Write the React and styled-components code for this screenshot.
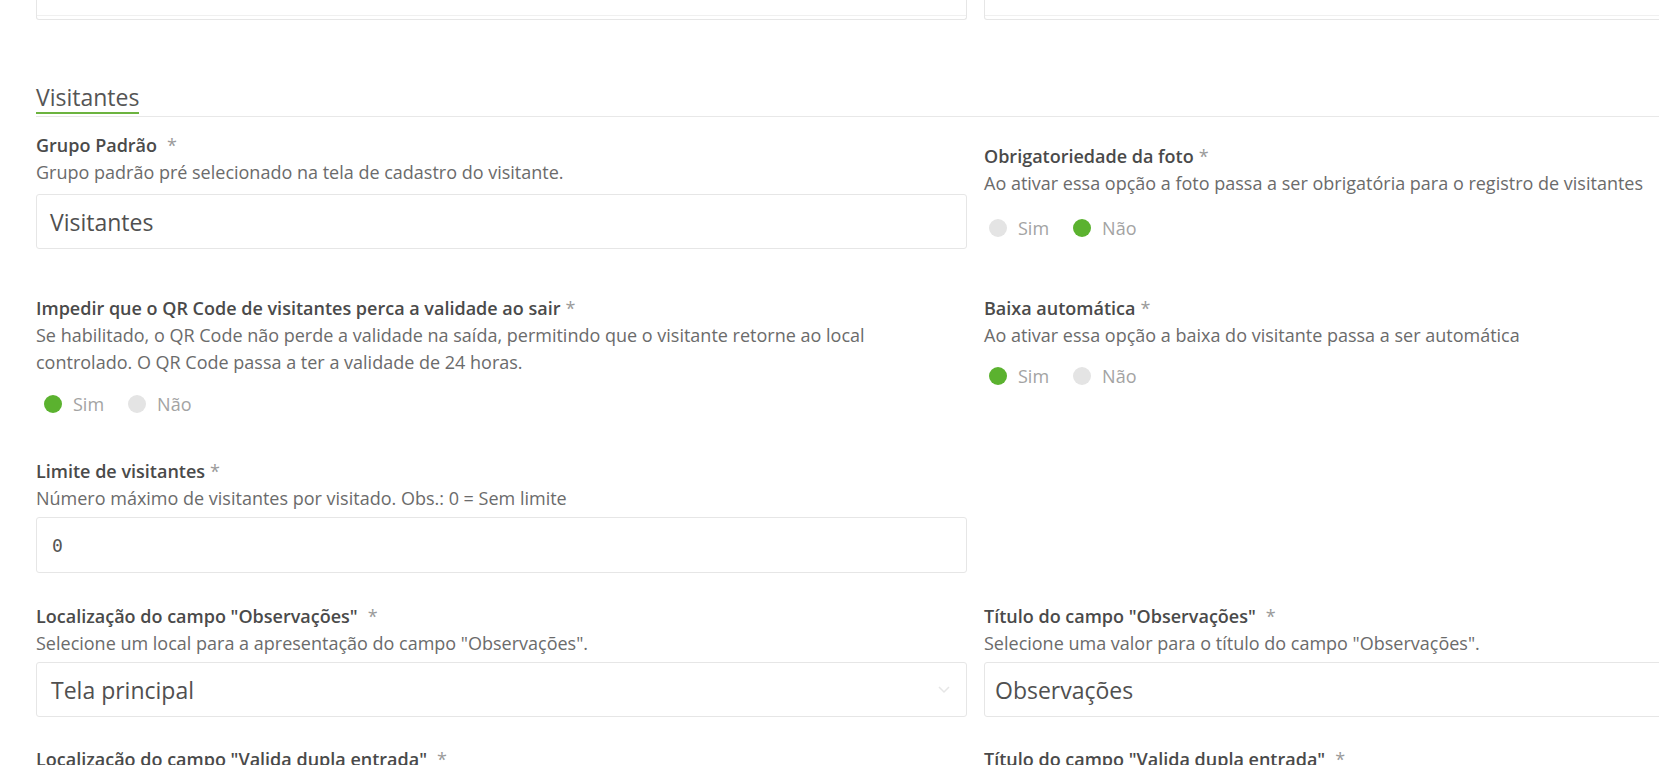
import styled, { createGlobalStyle } from 'styled-components';

const colors = {
  green: '#5bb22f',
  off: '#e4e4e4',
  border: '#e6e6e6',
  label: '#4a4a4a',
  text: '#6b6b6b',
  muted: '#a3a3a3',
};

const GlobalStyle = createGlobalStyle`
  html, body {
    margin: 0;
    padding: 0;
    background: #fff;
    overflow: hidden;
  }
  body {
    font-family: "Open Sans", "Noto Sans", sans-serif;
    -webkit-font-smoothing: antialiased;
  }
`;

const Page = styled.div`
  width: 1915px;
  padding-left: 36px;
  box-sizing: border-box;
`;

const Row = styled.div`
  display: grid;
  grid-template-columns: 931px 931px;
  column-gap: 17px;
  align-items: start;
  margin-top: ${({ $top }) => $top || 0}px;
`;

const TopBox = styled.div`
  height: 20px;
  box-sizing: border-box;
  border: 1px solid ${colors.border};
  border-top: none;
  border-radius: 0 0 3px 3px;
`;

const TopInner = styled.div`
  height: 15px;
  border-bottom: 1px solid #f0f0f0;
`;

const SectionHeader = styled.div`
  margin-top: 63px;
  border-bottom: 1px solid #e8e8e8;
`;

const SectionTitle = styled.h2`
  display: inline-block;
  margin: 0 0 2px;
  font-size: 23px;
  line-height: 29px;
  font-weight: 400;
  color: #555;
  border-bottom: 2px solid #6cb33f;
`;

const Field = styled.div`
  padding-top: ${({ $pad }) => $pad || 0}px;
`;

const Label = styled.div`
  font-size: 18px;
  font-weight: 600;
  line-height: 27px;
  color: ${colors.label};
  white-space: nowrap;
`;

const Star = styled.span`
  color: #9a9a9a;
  font-weight: 400;
  margin-left: ${({ $gap }) => $gap || 5}px;
`;

const Desc = styled.div`
  font-size: 18px;
  line-height: 27px;
  color: ${colors.text};
  white-space: nowrap;
`;

const Input = styled.div`
  position: relative;
  margin-top: ${({ $top }) => $top || 8}px;
  height: ${({ $h }) => $h || 55}px;
  box-sizing: border-box;
  border: 1px solid ${colors.border};
  border-radius: 3px;
  display: flex;
  align-items: center;
  padding-left: ${({ $pad }) => $pad || 13}px;
  font-size: 23px;
  color: #505050;
`;

const Chevron = styled.svg`
  position: absolute;
  right: 16px;
  top: 50%;
  margin-top: -4px;
`;

const Mono = styled.span`
  font-family: "DejaVu Sans Mono", monospace;
  font-size: 18px;
  color: #555;
`;

const RadioGroup = styled.div`
  display: flex;
  align-items: center;
  gap: 24px;
  margin-top: ${({ $top }) => $top || 20}px;
  padding-left: ${({ $indent }) => $indent || 7}px;
  height: 18px;
`;

const RadioOption = styled.div`
  display: flex;
  align-items: center;
  gap: 11px;
  font-size: 18px;
  line-height: 18px;
  color: ${colors.muted};
`;

const Dot = styled.span`
  width: 18px;
  height: 18px;
  border-radius: 50%;
  background: ${({ $on }) => ($on ? colors.green : colors.off)};
`;

const Radios = ({ value, top, indent }) => (
  <RadioGroup $top={top} $indent={indent}>
    <RadioOption>
      <Dot $on={value === 'sim'} />
      Sim
    </RadioOption>
    <RadioOption>
      <Dot $on={value === 'nao'} />
      Não
    </RadioOption>
  </RadioGroup>
);

const App = () => (
  <Page>
    <GlobalStyle />
    <Row>
      <TopBox><TopInner /></TopBox>
      <TopBox><TopInner /></TopBox>
    </Row>

    <SectionHeader>
      <SectionTitle>Visitantes</SectionTitle>
    </SectionHeader>

    <Row $top={15}>
      <Field>
        <Label>Grupo Padrão<Star $gap={10}>*</Star></Label>
        <Desc>Grupo padrão pré selecionado na tela de cadastro do visitante.</Desc>
        <Input>Visitantes</Input>
      </Field>
      <Field $pad={11}>
        <Label>Obrigatoriedade da foto<Star>*</Star></Label>
        <Desc>Ao ativar essa opção a foto passa a ser obrigatória para o registro de visitantes</Desc>
        <Radios value="nao" top={22} indent={5} />
      </Field>
    </Row>

    <Row $top={46}>
      <Field>
        <Label>Impedir que o QR Code de visitantes perca a validade ao sair<Star>*</Star></Label>
        <Desc>
          Se habilitado, o QR Code não perde a validade na saída, permitindo que o visitante retorne ao local
          <br />
          controlado. O QR Code passa a ter a validade de 24 horas.
        </Desc>
        <Radios value="sim" top={19} indent={8} />
      </Field>
      <Field>
        <Label>Baixa automática<Star>*</Star></Label>
        <Desc>Ao ativar essa opção a baixa do visitante passa a ser automática</Desc>
        <Radios value="sim" top={18} indent={5} />
      </Field>
    </Row>

    <Row $top={45}>
      <Field>
        <Label>Limite de visitantes<Star>*</Star></Label>
        <Desc>Número máximo de visitantes por visitado. Obs.: 0 = Sem limite</Desc>
        <Input $top={5} $h={56} $pad={15}><Mono>0</Mono></Input>
      </Field>
      <div />
    </Row>

    <Row $top={30}>
      <Field>
        <Label>Localização do campo "Observações"<Star $gap={10}>*</Star></Label>
        <Desc>Selecione um local para a apresentação do campo "Observações".</Desc>
        <Input $top={5} $pad={14}>
          Tela principal
          <Chevron width="12" height="8" viewBox="0 0 12 8">
            <path d="M1 1l5 5 5-5" fill="none" stroke="#e6e6e6" strokeWidth="1.5" />
          </Chevron>
        </Input>
      </Field>
      <Field>
        <Label>Título do campo "Observações"<Star $gap={10}>*</Star></Label>
        <Desc>Selecione uma valor para o título do campo "Observações".</Desc>
        <Input $top={5} $pad={10}>Observações</Input>
      </Field>
    </Row>

    <Row $top={29}>
      <Field>
        <Label>Localização do campo "Valida dupla entrada"<Star $gap={10}>*</Star></Label>
      </Field>
      <Field>
        <Label>Título do campo "Valida dupla entrada"<Star $gap={10}>*</Star></Label>
      </Field>
    </Row>
  </Page>
);

export default App;
